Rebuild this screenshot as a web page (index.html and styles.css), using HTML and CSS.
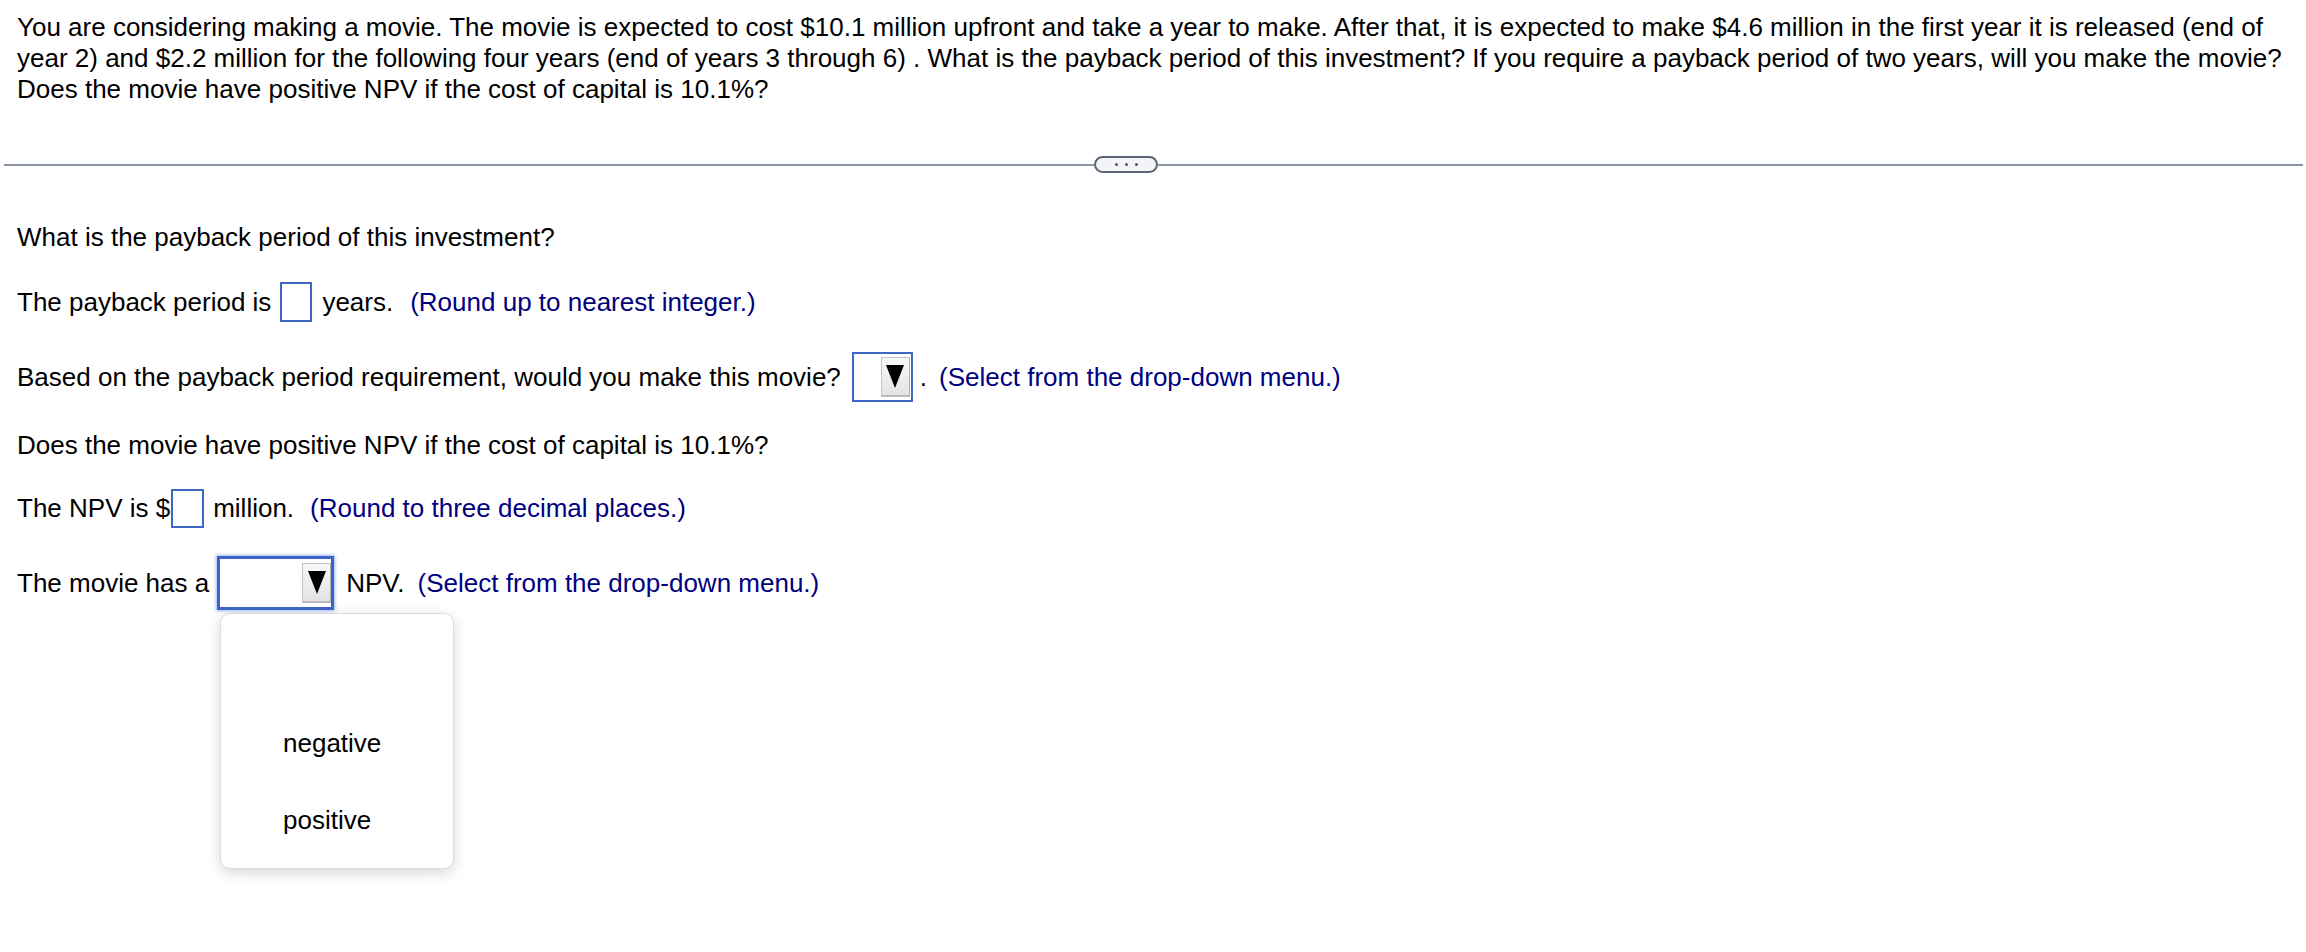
FILE: index.html
```html
<!DOCTYPE html>
<html lang="en">
<head>
<meta charset="utf-8">
<title>Payback period question</title>
<link rel="stylesheet" href="styles.css">
</head>
<body>
<p class="problem">You are considering making a movie. The movie is expected to cost $10.1 million upfront and take a year to make. After that, it is expected to make $4.6 million in the first year it is released (end of year 2) and $2.2 million for the following four years (end of years 3 through 6) . What is the payback period of this investment? If you require a payback period of two years, will you make the movie? Does the movie have positive NPV if the cost of capital is 10.1%?</p>

<div class="divider">
  <span class="rule"></span>
  <span class="pill"><i></i><i></i><i></i></span>
  <span class="rule"></span>
</div>

<div class="questions">
  <div class="row row-q1"><span>What is the payback period of this investment?</span></div>

  <div class="row row-payback">
    <span>The payback period is</span>
    <span class="ans ans-payback"></span>
    <span class="after-box">years.</span>
    <span class="hint hint-payback">(Round up to nearest integer.)</span>
  </div>

  <div class="row row-make">
    <span>Based on the payback period requirement, would you make this movie?</span>
    <span class="select select-make"><span class="btn"><svg width="18" height="23" viewBox="0 0 18 23"><polygon points="0,0 18,0 9,23" fill="#000"/></svg></span></span>
    <span class="dot">.</span>
    <span class="hint hint-make">(Select from the drop-down menu.)</span>
  </div>

  <div class="row row-q2"><span>Does the movie have positive NPV if the cost of capital is 10.1%?</span></div>

  <div class="row row-npv">
    <span>The NPV is $</span>
    <span class="ans ans-npv"></span>
    <span class="after-box">million.</span>
    <span class="hint hint-npv">(Round to three decimal places.)</span>
  </div>

  <div class="row row-sign">
    <span>The movie has a</span>
    <span class="select select-sign"><span class="btn"><svg width="18" height="23" viewBox="0 0 18 23"><polygon points="0,0 18,0 9,23" fill="#000"/></svg></span></span>
    <span class="npv-word">NPV.</span>
    <span class="hint hint-sign">(Select from the drop-down menu.)</span>
  </div>

  <div class="menu">
    <div class="option option-first">negative</div>
    <div class="option">positive</div>
  </div>
</div>
</body>
</html>
```

FILE: styles.css
```css
html, body {
  margin: 0;
  padding: 0;
  background: #ffffff;
}

body {
  font-family: "Liberation Sans", Arial, Helvetica, sans-serif;
  font-size: 26px;
  line-height: 31px;
  color: #000000;
  min-height: 952px;
}

.problem {
  margin: 0;
  padding: 12px 6px 0 17px;
}

.divider {
  display: grid;
  grid-template-columns: 1090px 64px 1fr;
  align-items: center;
  margin: 51px 3px 0 4px;
  height: 17px;
}

.rule {
  display: block;
  height: 2px;
  background: #8b95a4;
}

.pill {
  box-sizing: border-box;
  height: 17px;
  border: 2px solid #5b6575;
  border-radius: 9px;
  background: #f3f4f6;
  display: flex;
  align-items: center;
  justify-content: center;
  gap: 7px;
}

.pill i {
  display: block;
  width: 3px;
  height: 3px;
  border-radius: 50%;
  background: #4a5261;
}

.questions {
  padding: 0 0 60px 17px;
}

.row {
  display: flex;
  align-items: center;
  white-space: nowrap;
}

.row-q1 { margin-top: 49px; }
.row-payback { margin-top: 29px; height: 40px; }
.row-make { margin-top: 30px; height: 50px; }
.row-q2 { margin-top: 28px; }
.row-npv { margin-top: 28px; height: 39px; }
.row-sign { margin-top: 28px; height: 54px; }

.ans {
  box-sizing: border-box;
  display: block;
  border: 2px solid #3d67c5;
  background: #fff;
}

.ans-payback {
  width: 32px;
  height: 40px;
  margin-left: 9px;
}

.ans-npv {
  width: 33px;
  height: 39px;
  margin-left: 1px;
}

.after-box { margin-left: 10px; }
.row-npv .after-box { margin-left: 9px; }

.hint {
  color: #000080;
}

.hint-payback { margin-left: 17px; }
.hint-npv { margin-left: 16px; }
.hint-make { margin-left: 12px; }
.hint-sign { margin-left: 13px; }

.select {
  box-sizing: border-box;
  display: flex;
  justify-content: flex-end;
  align-items: center;
  background: #fff;
}

.select-make {
  width: 61px;
  height: 50px;
  margin-left: 11px;
  border: 2px solid #3d67c5;
  padding-right: 1px;
}

.select-sign {
  width: 117px;
  height: 54px;
  margin-left: 8px;
  border: 3px solid #3b64c9;
  box-shadow: 0 0 3px 1px rgba(86, 124, 222, 0.55);
}

.btn {
  box-sizing: border-box;
  display: flex;
  align-items: center;
  justify-content: center;
  width: 29px;
  height: 40px;
  border: 1px solid #c4c4c4;
  border-right-color: #b3b3b3;
  border-bottom: 2px solid #b8b8b8;
  background: linear-gradient(#f8f8f8, #e3e3e3);
}

.btn svg {
  display: block;
}

.dot { margin-left: 7px; }

.npv-word { margin-left: 12px; }

.menu {
  box-sizing: border-box;
  width: 234px;
  height: 256px;
  margin: 3px 0 0 203px;
  border: 1px solid #dcdcdc;
  border-radius: 10px;
  background: #fff;
  box-shadow: 0 4px 14px rgba(0, 0, 0, 0.16);
  padding: 114px 0 0 62px;
}

.option {
  line-height: 31px;
}

.option-first {
  margin-bottom: 46px;
}
```
